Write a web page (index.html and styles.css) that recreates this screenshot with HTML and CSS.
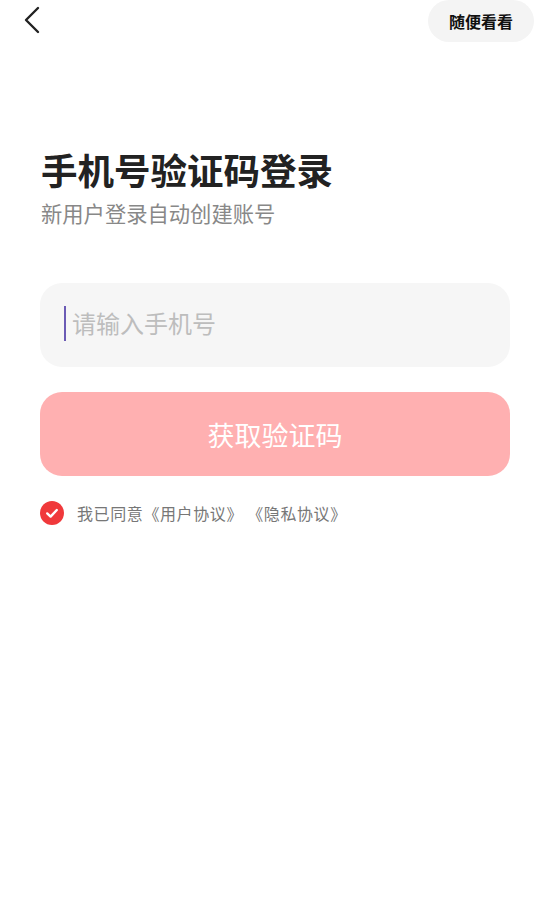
FILE: index.html
```html
<!DOCTYPE html>
<html>
<head>
  <title>手机号验证码登录</title>
  <meta name="viewport" content="width=device-width, initial-scale=1">
  <link rel="stylesheet" href="styles.css">
</head>
<body>
  <div class="top-bar">
    <a class="back" href="#">
      <svg width="18" height="28" viewBox="0 0 18 28">
        <path d="M15 2 L3 14 L15 26" fill="none" stroke="#222" stroke-width="2.4" stroke-linecap="round" stroke-linejoin="round"/>
      </svg>
    </a>
    <a class="browse" href="#">随便看看</a>
  </div>

  <div class="content">
    <h1 class="title">手机号验证码登录</h1>
    <p class="subtitle">新用户登录自动创建账号</p>

    <div class="phone-box">
      <span class="caret"></span>
      <input class="phone" type="tel" placeholder="请输入手机号">
    </div>

    <button class="get-code" type="button">获取验证码</button>

    <label class="agree">
      <span class="check">
        <svg width="24" height="24" viewBox="0 0 24 24">
          <circle cx="12" cy="12" r="12" fill="#f0393b"/>
          <path d="M7.2 12.4 L10.6 15.6 L16.8 9" fill="none" stroke="#fff" stroke-width="2.4" stroke-linecap="round" stroke-linejoin="round"/>
        </svg>
      </span>
      <span class="agree-text">我已同意《用户协议》 《隐私协议》</span>
    </label>
  </div>
</body>
</html>
```

FILE: styles.css
```css
body {
  margin: 0;
  background-color: #fff;
  font-family: "Noto Sans CJK SC", "Noto Sans", sans-serif;
  color: #222;
}

.top-bar {
  height: 42px;
  display: flex;
  align-items: center;
  justify-content: space-between;
  padding: 0 9px 0 23px;
}

.back {
  display: flex;
  align-items: center;
  margin-top: -2px;
}

.browse {
  height: 42px;
  padding: 0 21px;
  border-radius: 21px;
  background-color: #f4f4f4;
  color: #111;
  font-size: 16px;
  font-weight: 700;
  line-height: 42px;
  text-decoration: none;
}

.content {
  padding: 0 33px 0 40px;
}

.title {
  margin: 106px 0 0 1px;
  font-size: 36.5px;
  font-weight: 700;
  line-height: 44px;
  color: #222;
}

.subtitle {
  margin: 6px 0 0 1px;
  font-size: 21.3px;
  line-height: 30px;
  color: #888;
}

.phone-box {
  margin-top: 55px;
  height: 84px;
  border-radius: 22px;
  background-color: #f6f6f6;
  display: flex;
  align-items: center;
  padding-left: 24px;
}

.caret {
  width: 2px;
  height: 35px;
  margin-top: -4px;
  background-color: #6b5bb5;
}

.phone {
  flex: 1;
  border: none;
  outline: none;
  background: transparent;
  font-family: inherit;
  font-size: 24px;
  padding: 0 0 6px 6px;
  color: #222;
}

.phone::placeholder {
  color: #bdbdbd;
}

.get-code {
  display: block;
  width: 100%;
  height: 84px;
  margin-top: 25px;
  border: none;
  border-radius: 22px;
  background-color: #ffb0b1;
  color: #fff;
  font-family: inherit;
  font-size: 27px;
}

.agree {
  display: flex;
  align-items: center;
  margin-top: 25px;
  height: 24px;
}

.check {
  display: flex;
  margin-right: 13px;
}

.agree-text {
  font-size: 16px;
  letter-spacing: 0.6px;
  color: #777;
}
```
